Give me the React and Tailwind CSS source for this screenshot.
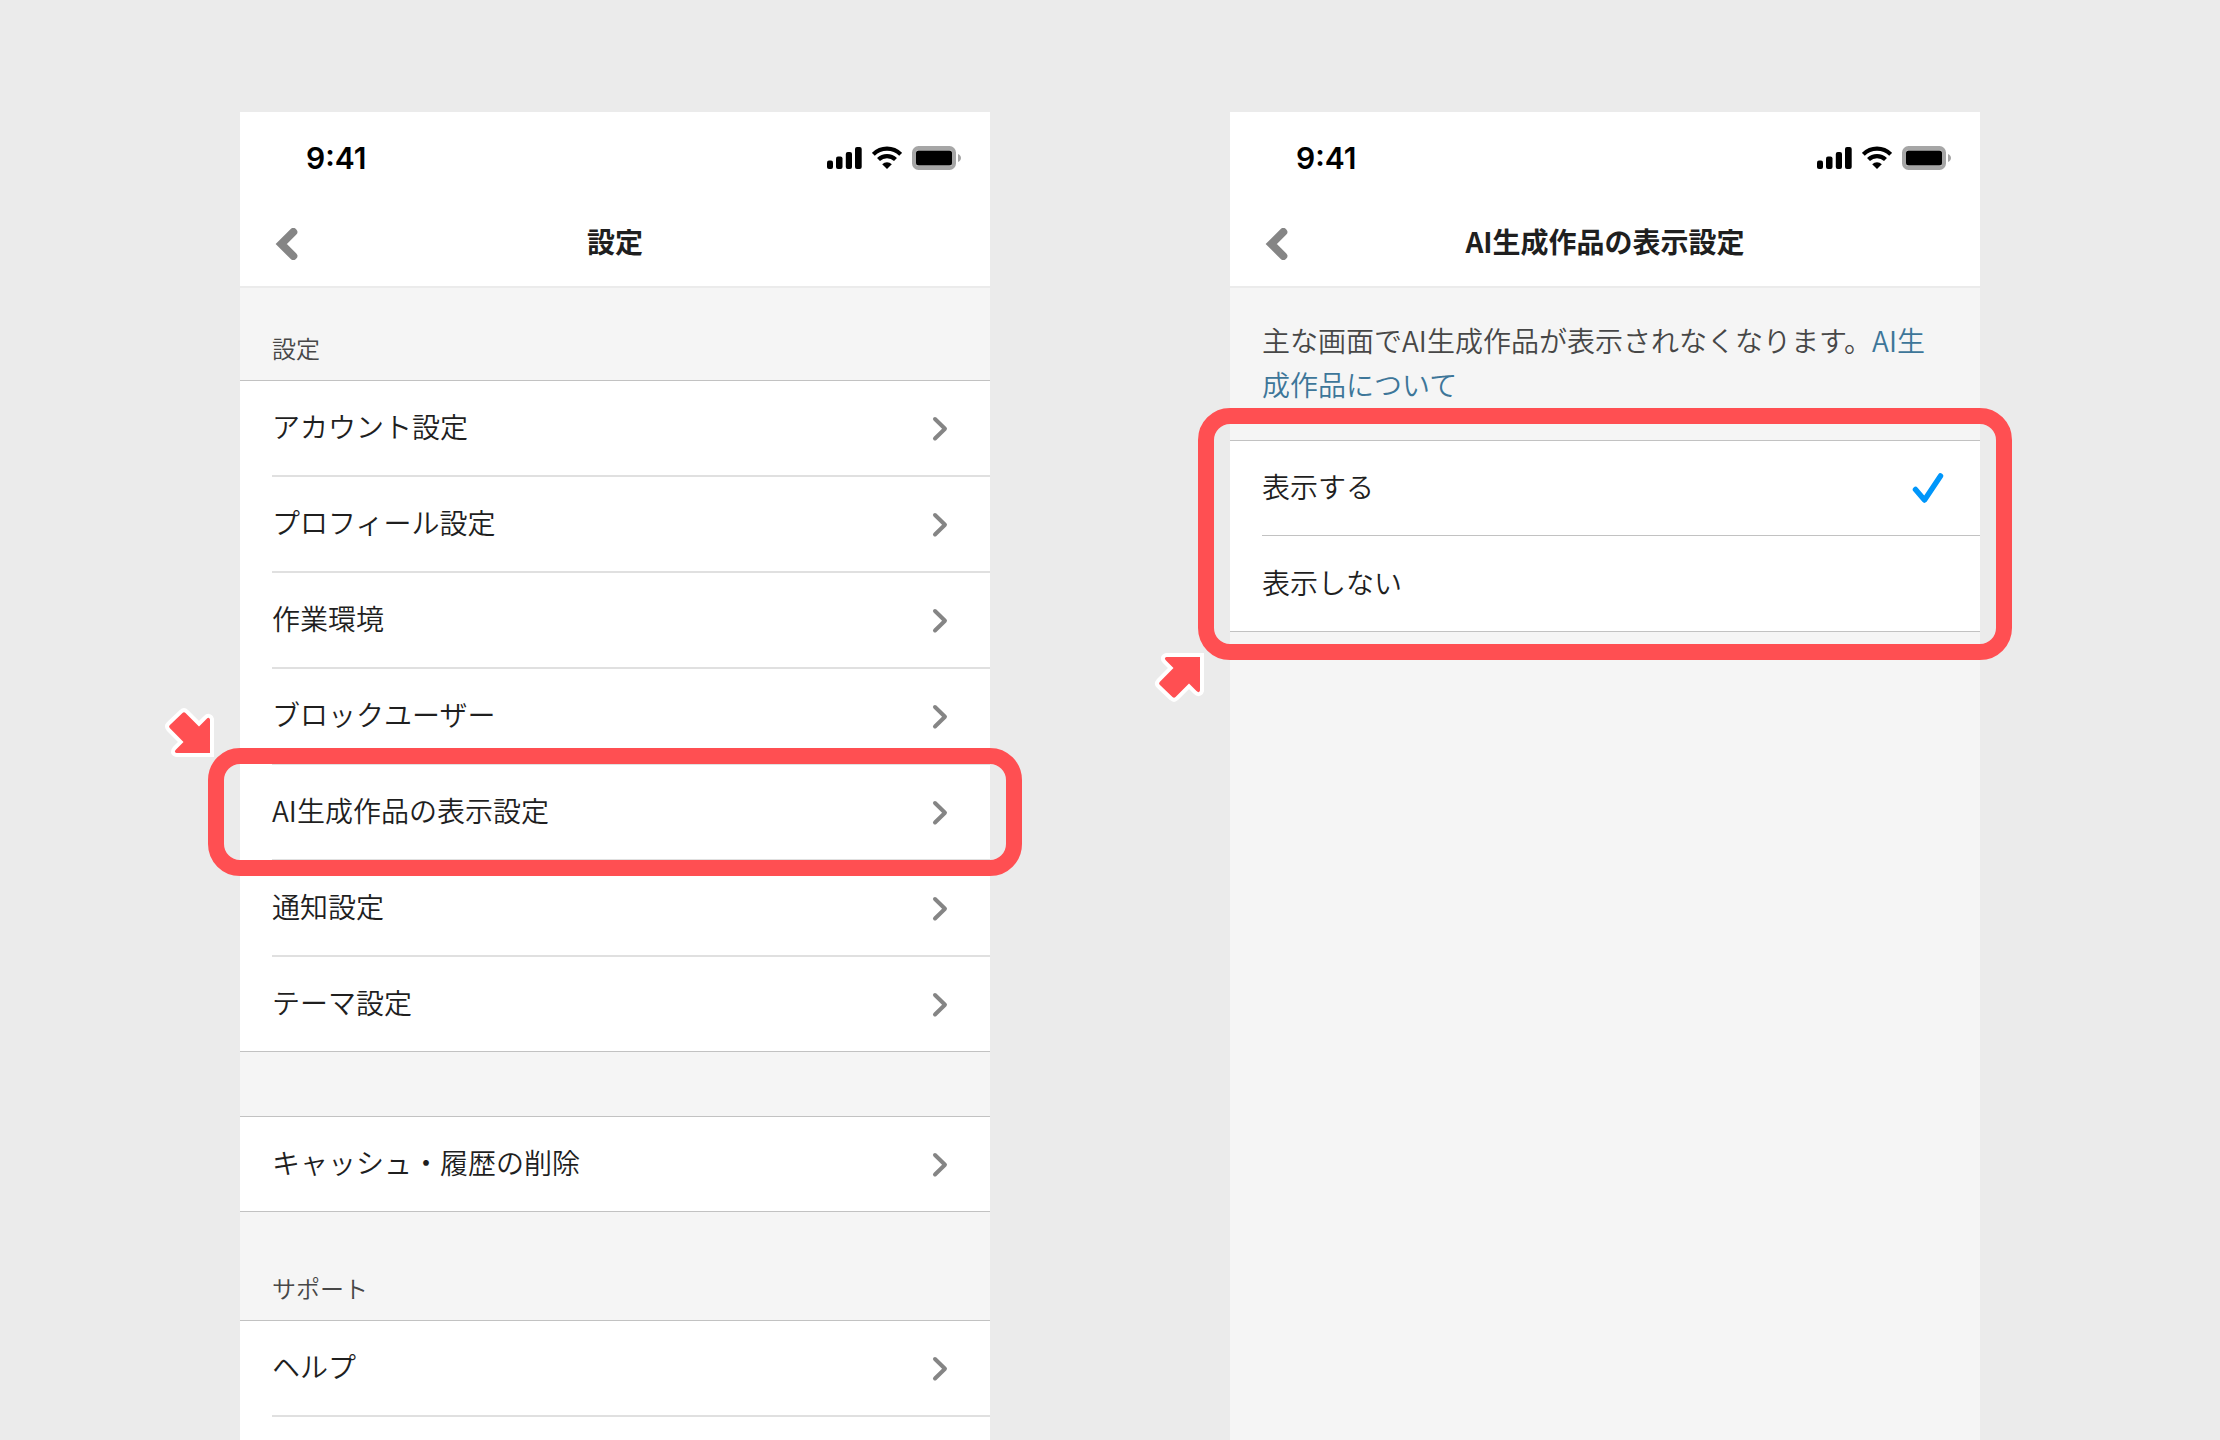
import { useState } from "react";

const accountItems = [
  "アカウント設定",
  "プロフィール設定",
  "作業環境",
  "ブロックユーザー",
  "AI生成作品の表示設定",
  "通知設定",
  "テーマ設定",
];
const highlightedItem = "AI生成作品の表示設定";
const visibilityOptions = ["表示する", "表示しない"];

function StatusIcons() {
  return (
    <div className="flex items-center gap-2.5">
      <svg width="35" height="24" viewBox="0 0 35 24" aria-hidden="true">
        <rect x="0" y="14.5" width="6" height="8.5" rx="2" />
        <rect x="9" y="10.5" width="6.5" height="12.5" rx="2" />
        <rect x="18.8" y="6" width="6.2" height="17" rx="2" />
        <rect x="28" y="1" width="6.7" height="22" rx="2" />
      </svg>
      <svg width="30" height="24" viewBox="0 0 30 24" aria-hidden="true">
        <g fill="none" stroke="#000" strokeWidth="4.2">
          <path d="M1.3 8.3a19.5 19.5 0 0 1 27.4 0" />
          <path d="M6.5 13.6a12.2 12.2 0 0 1 17 0" />
        </g>
        <path d="M10.2 18.2a7 7 0 0 1 9.6 0L15 23Z" />
      </svg>
      <svg width="50" height="24" viewBox="0 0 50 24" aria-hidden="true">
        <rect x="2" y="2" width="40" height="20" rx="4.5" fill="none" stroke="#a6a6a6" strokeWidth="4" />
        <rect x="4" y="4.5" width="36" height="15" rx="2.5" />
        <path d="M46 8c4 1.500 4 6.500 0 8Z" fill="#a6a6a6" />
      </svg>
    </div>
  );
}

function PhoneHeader({ title }) {
  return (
    <header className="border-b-2 border-[#ebebeb] bg-white">
      <div className="flex h-[92px] items-center justify-between pr-7 pl-[66px]">
        <span className="font-['Inter','Liberation_Sans',sans-serif] text-[30px] font-semibold text-black">
          9:41
        </span>
        <StatusIcons />
      </div>
      <div className="grid h-[82px] grid-cols-[1fr_auto_1fr] items-center px-8 pb-2">
        <button type="button" aria-label="戻る" className="w-8 pt-1.5">
          <svg width="32" height="32" viewBox="0 0 32 32" aria-hidden="true">
            <path
              d="M21.300 4 9.300 16l12 12"
              fill="none"
              stroke="#858585"
              strokeWidth="8"
              strokeLinecap="round"
            />
          </svg>
        </button>
        <h1 className="text-[28px] leading-10 font-bold text-[#1f1f1f]">{title}</h1>
      </div>
    </header>
  );
}

function Phone({ title, children }) {
  return (
    <section className="flex min-w-0 flex-1 flex-col bg-[#f5f5f5]">
      <PhoneHeader title={title} />
      {children}
    </section>
  );
}

function SectionLabel({ children }) {
  return (
    <h2 className="px-8 pb-3.5 text-2xl leading-9 font-[350] text-[#474747]">{children}</h2>
  );
}

function Highlight({ className, arrowUp }) {
  return (
    <div
      className={`pointer-events-none absolute -inset-x-8 z-10 rounded-[32px] border-16 border-[#ff4f52] ${className}`}
    >
      <svg
        width="50"
        height="51"
        viewBox="0 0 50 51"
        aria-hidden="true"
        className={`absolute -left-[59px] overflow-visible ${
          arrowUp ? "-bottom-[59px] -scale-y-100" : "-top-[57px]"
        }`}
      >
        <path
          d="M17.500 6Q19 4.500 20.500 6L34 19.500 41.500 12Q44 9.500 45 12.500V46H11.500Q8.500 45 11 42.500L18.500 35 4.700 21Q3.400 19.500 4.700 18.200Z"
          fill="#ff4f52"
          stroke="#fff"
          strokeWidth="8"
          paintOrder="stroke"
        />
      </svg>
    </div>
  );
}

function SettingsList({ items, open }) {
  return (
    <ul className={`border-t border-[#c2c2c2] bg-white ${open ? "" : "border-b"}`}>
      {items.map((item, index) => (
        <li key={item} className="relative pl-8">
          <button
            type="button"
            className={`flex w-full items-center justify-between border-[#e0e0e0] pr-10 text-left text-[28px] leading-10 font-[350] text-[#1f1f1f] ${
              index === 0 ? "h-[94px]" : "h-24 border-t-2"
            }`}
          >
            <span className="pb-1">{item}</span>
            <svg width="20" height="28" viewBox="0 0 20 28" aria-hidden="true">
              <path
                d="m5 5 10 9.700L5 24.500"
                fill="none"
                stroke="#858585"
                strokeWidth="4"
                strokeLinecap="round"
                strokeLinejoin="round"
              />
            </svg>
          </button>
          {item === highlightedItem && <Highlight className="-top-[15px] -bottom-[17px]" />}
        </li>
      ))}
      {open && <li aria-hidden="true" className="ml-8 border-t-2 border-[#e0e0e0]" />}
    </ul>
  );
}

function VisibilityOptions() {
  const [selected, setSelected] = useState(visibilityOptions[0]);

  return (
    <fieldset
      aria-label="AI生成作品の表示設定"
      className="relative border-y border-[#c2c2c2] bg-white"
    >
      {visibilityOptions.map((option, index) => (
        <div key={option} className="pl-8">
          <label
            className={`flex h-[95px] items-center justify-between pr-9 text-[28px] leading-10 font-[350] text-[#1f1f1f] ${
              index === 0 ? "border-b border-[#c2c2c2]" : ""
            }`}
          >
            <span className="pb-1">{option}</span>
            <input
              type="radio"
              name="ai-visibility"
              className="sr-only"
              checked={selected === option}
              onChange={() => setSelected(option)}
            />
            {selected === option && (
              <svg width="32" height="32" viewBox="0 0 32 32" aria-hidden="true">
                <path
                  d="m3.500 17.500 9 10.500 16-24"
                  fill="none"
                  stroke="#0096fa"
                  strokeWidth="5.500"
                  strokeLinecap="round"
                  strokeLinejoin="round"
                />
              </svg>
            )}
          </label>
        </div>
      ))}
      <Highlight className="-top-[33px] -bottom-[29px]" arrowUp />
    </fieldset>
  );
}

export default function App() {
  return (
    <main
      lang="ja"
      className="flex h-screen gap-60 overflow-hidden bg-[#ebebeb] px-60 pt-28 font-['Noto_Sans_CJK_JP',sans-serif]"
    >
      <Phone title="設定">
        <div className="flex h-[92px] flex-col justify-end">
          <SectionLabel>設定</SectionLabel>
        </div>
        <SettingsList items={accountItems} />
        <div className="mt-16">
          <SettingsList items={["キャッシュ・履歴の削除"]} />
        </div>
        <div className="flex h-27 flex-col justify-end">
          <SectionLabel>サポート</SectionLabel>
        </div>
        <SettingsList items={["ヘルプ"]} open />
        <div className="grow bg-white" />
      </Phone>

      <Phone title="AI生成作品の表示設定">
        <p className="px-8 pt-7.5 pb-8.5 text-[28px] leading-[44px] font-[350] text-[#474747]">
          主な画面でAI生成作品が表示されなくなります。
          <a href="#about-ai" className="text-[#3d7699]">
            AI生成作品について
          </a>
        </p>
        <VisibilityOptions />
      </Phone>
    </main>
  );
}
